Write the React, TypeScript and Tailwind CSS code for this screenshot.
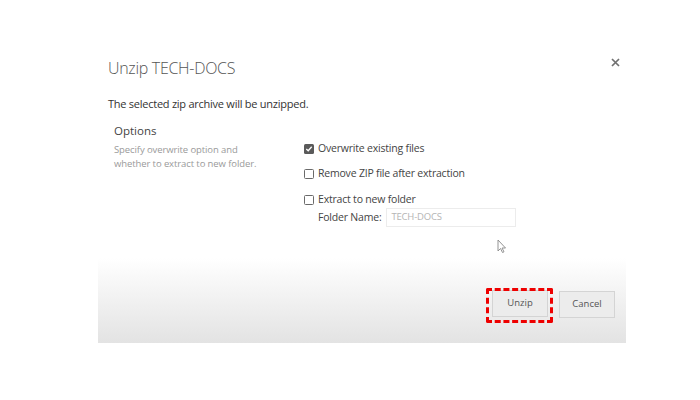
import React from "react";

function Box({ checked }: { checked?: boolean }) {
  return checked ? (
    <span className="w-[10px] h-[10px] rounded-[1.5px] bg-[#5a5a5a] flex items-center justify-center shrink-0">
      <svg width="8" height="8" viewBox="0 0 8 8">
        <path d="M1.3 4 L3.2 5.8 L6.7 1.8" stroke="#fff" strokeWidth="1.3" fill="none" />
      </svg>
    </span>
  ) : (
    <span className="w-[10px] h-[10px] rounded-[1.5px] border border-[#6a6a6a] bg-white shrink-0" />
  );
}

export default function App() {
  return (
    <div
      className="w-[700px] h-[400px] bg-white relative overflow-hidden"
      style={{ fontFamily: '"Open Sans", "Noto Sans", sans-serif' }}
    >
      <div className="absolute left-[98px] top-[48px] w-[528px] h-[295px] flex flex-col bg-white">
        <div className="flex-1 flex flex-col px-[10px] pt-[8px]">
          <div className="flex justify-between items-start">
            <div className="text-[16px] font-light text-[#555] tracking-[-0.3px] leading-[24px]">Unzip TECH-DOCS</div>
            <svg className="mt-[2px] -mr-[4px]" width="9" height="9" viewBox="0 0 9 9">
              <path d="M1 1 L8 8 M8 1 L1 8" stroke="#707070" strokeWidth="1.7" />
            </svg>
          </div>
          <div className="mt-[17px] text-[11px] text-[#333] leading-[14px] tracking-[-0.25px]">
            The selected zip archive will be unzipped.
          </div>
          <div className="flex mt-[12px]">
            <div className="w-[196px] pl-[6px]">
              <div className="text-[11.5px] text-[#444] leading-[16px]">Options</div>
              <div className="mt-[4px] text-[9.5px] text-[#9a9a9a] leading-[14px] tracking-[-0.1px]">
                Specify overwrite option and
                <br />
                whether to extract to new folder.
              </div>
            </div>
            <div className="flex flex-col pt-[19px] text-[10.5px] text-[#444] tracking-[-0.2px]">
              <div className="flex items-center gap-[4px] h-[14px]">
                <Box checked />
                <span>Overwrite existing files</span>
              </div>
              <div className="flex items-center gap-[4px] h-[14px] mt-[11px]">
                <Box />
                <span>Remove ZIP file after extraction</span>
              </div>
              <div className="flex items-center gap-[4px] h-[14px] mt-[12px]">
                <Box />
                <span>Extract to new folder</span>
              </div>
              <div className="flex items-center ml-[14px] mt-[1px] gap-[5px]">
                <span className="text-[#444]">Folder Name:</span>
                <div className="w-[130px] h-[19px] border border-[#ececec] bg-white flex items-center px-[4px] text-[9.5px] text-[#b5b5b5]">
                  TECH-DOCS
                </div>
              </div>
            </div>
          </div>
          <div className="flex-1" />
        </div>
        <div className="h-[85px] bg-gradient-to-b from-white to-[#e3e3e3] flex justify-end items-start pt-[32px] pr-[11px] gap-[11px]">
          <div className="relative">
            <div className="absolute -left-[6px] -top-[2px] w-[67px] h-[35px] border-[3px] border-dashed border-[#ee0000] rounded-[2px]" />
            <div className="w-[56px] h-[27px] border border-[#d4d4d4] bg-[#ececec] flex items-center justify-center text-[9.5px] text-[#555]">
              Unzip
            </div>
          </div>
          <div className="w-[56px] h-[27px] border border-[#d4d4d4] bg-[#ececec] flex items-center justify-center text-[9.5px] text-[#555] mt-[1px]">
            Cancel
          </div>
        </div>
      </div>
      <svg className="absolute left-[497px] top-[239px]" width="10" height="15" viewBox="0 0 10 15">
        <path d="M1 1 L1 12 L3.5 9.5 L5.5 13.5 L7 12.8 L5 9 L8.5 9 Z" fill="#fff" stroke="#888" strokeWidth="0.9" />
      </svg>
    </div>
  );
}
